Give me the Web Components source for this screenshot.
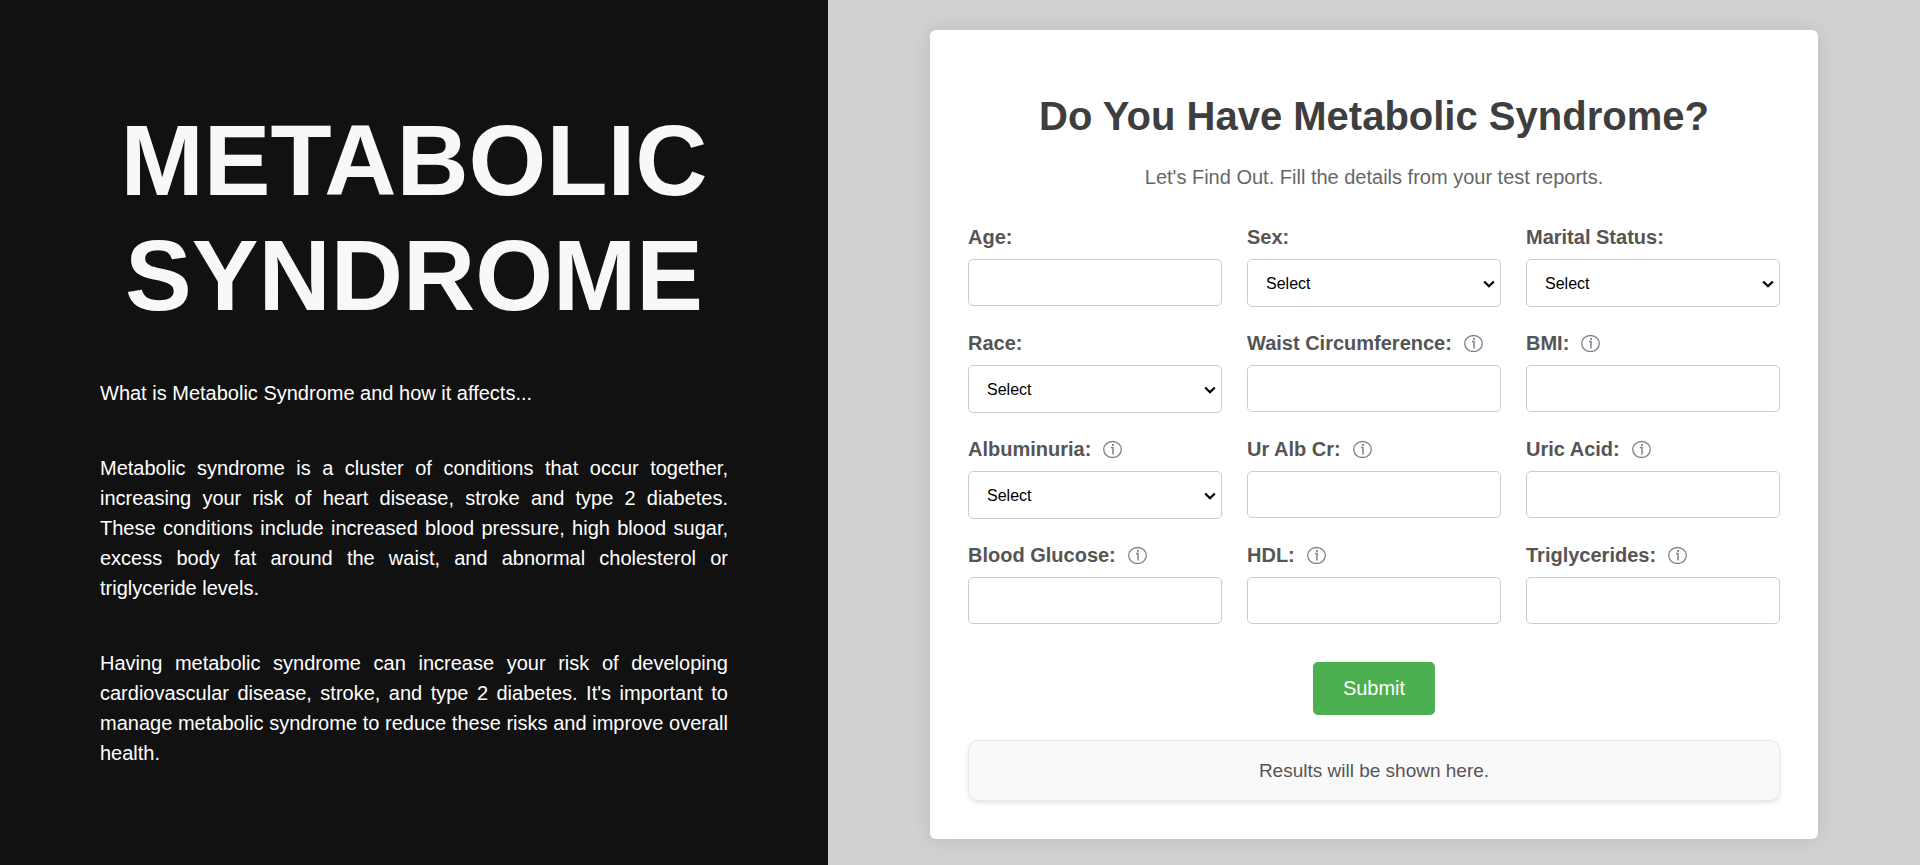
<!DOCTYPE html>
<html lang="en">
<head>
<meta charset="utf-8">
<title>Metabolic Syndrome</title>
<style>
  body { margin: 0; font-family: "Liberation Sans", Arial, sans-serif; background: #d2d1cf; }
</style>
</head>
<body>
<syndrome-page>
  <intro-panel slot="intro" heading="METABOLIC SYNDROME">
    <p>What is Metabolic Syndrome and how it affects...</p>
    <p>Metabolic syndrome is a cluster of conditions that occur together, increasing your risk of heart disease, stroke and type 2 diabetes. These conditions include increased blood pressure, high blood sugar, excess body fat around the waist, and abnormal cholesterol or triglyceride levels.</p>
    <p>Having metabolic syndrome can increase your risk of developing cardiovascular disease, stroke, and type 2 diabetes. It's important to manage metabolic syndrome to reduce these risks and improve overall health.</p>
  </intro-panel>
  <form-card>
    <span slot="title">Do You Have Metabolic Syndrome?</span>
    <span slot="subtitle">Let's Find Out. Fill the details from your test reports.</span>
    <form-field label="Age:"></form-field>
    <form-field label="Sex:" kind="select"></form-field>
    <form-field label="Marital Status:" kind="select"></form-field>
    <form-field label="Race:" kind="select"></form-field>
    <form-field label="Waist Circumference:" info></form-field>
    <form-field label="BMI:" info></form-field>
    <form-field label="Albuminuria:" kind="select" info></form-field>
    <form-field label="Ur Alb Cr:" info></form-field>
    <form-field label="Uric Acid:" info></form-field>
    <form-field label="Blood Glucose:" info></form-field>
    <form-field label="HDL:" info></form-field>
    <form-field label="Triglycerides:" info></form-field>
    <result-box slot="result">Results will be shown here.</result-box>
  </form-card>
</syndrome-page>

<script>
const define = (name, render) => customElements.define(name, class extends HTMLElement {
  connectedCallback() {
    if (!this.shadowRoot) this.attachShadow({ mode: "open" }).innerHTML = render(this);
  }
});

define("syndrome-page", () => `
  <style>
    :host { display: grid; grid-template-columns: minmax(0, 828fr) minmax(0, 1092fr); min-height: 100vh; }
    main { display: flex; flex-direction: column; align-items: center; padding: 30px 20px 26px; box-sizing: border-box; }
  </style>
  <slot name="intro"></slot>
  <main><slot></slot></main>`);

define("intro-panel", el => `
  <style>
    :host { display: block; background: #111; color: #fff; padding: 103px 100px 30px; box-sizing: border-box; }
    h1 { margin: 0 0 45px; font-size: 100px; line-height: 115px; color: #f8f8f8; text-align: center; }
    ::slotted(p) { margin: 0 0 45px; font-size: 20px; line-height: 30px; text-align: justify; }
    ::slotted(p:last-child) { margin-bottom: 0; }
  </style>
  <h1>${el.getAttribute("heading")}</h1>
  <slot></slot>`);

define("form-card", () => `
  <style>
    :host { display: block; width: 100%; max-width: 888px; padding: 61px 38px 38px; box-sizing: border-box;
            background: #fff; border-radius: 6px; box-shadow: 0 0 20px rgba(0, 0, 0, .1); text-align: center; }
    h2 { margin: 0 0 24px; font-size: 40px; line-height: 50px; color: #3e3e3e; }
    p { margin: 0 0 36px; font-size: 20px; line-height: 24px; color: #666; }
    .fields { display: grid; grid-template-columns: repeat(3, minmax(0, 1fr)); gap: 24px 25px; text-align: left; }
    button { display: block; margin: 37px auto 25px; padding: 15px 30px; border: 0; border-radius: 5px;
             background: #4caf50; color: #fff; font: 20px/23px "Liberation Sans", Arial, sans-serif; }
  </style>
  <h2><slot name="title"></slot></h2>
  <p><slot name="subtitle"></slot></p>
  <form onsubmit="return false">
    <div class="fields"><slot></slot></div>
    <button type="submit">Submit</button>
  </form>
  <slot name="result"></slot>`);

define("form-field", el => `
  <style>
    :host { display: block; }
    .head { display: flex; align-items: center; gap: 12px; height: 24px; margin-bottom: 10px; }
    label { font-size: 20px; line-height: 24px; font-weight: bold; color: #555; white-space: nowrap; }
    input, select { display: block; width: 100%; box-sizing: border-box; margin: 0; border: 1px solid #ccc; border-radius: 5px;
                    background-color: #fff; color: #000; font: 16px "Liberation Sans", Arial, sans-serif; }
    input { height: 47px; padding: 13px; margin-bottom: 1px; }
    select { height: 48px; padding: 13px 18px; appearance: none; }
    .pick { position: relative; }
    .pick svg { position: absolute; right: 6px; top: 20px; pointer-events: none; }
  </style>
  <div class="head">
    <label for="control">${el.getAttribute("label")}</label>
    ${el.hasAttribute("info") ? "<info-icon></info-icon>" : ""}
  </div>
  ${el.getAttribute("kind") === "select"
    ? `<div class="pick">
         <select id="control"><option>Select</option></select>
         <svg width="12" height="10" viewBox="0 0 12 10" fill="none" stroke="#000" stroke-width="2.300" aria-hidden="true"><path d="M1.200 2.500 6 7.200 10.800 2.500"/></svg>
       </div>`
    : '<input id="control" type="text">'}`);

define("info-icon", () => `
  <style>
    :host { display: block; width: 19px; height: 18px; color: #857d8c; }
    svg { display: block; }
  </style>
  <svg width="19" height="18" viewBox="0 0 19 18" fill="none" stroke="currentColor" role="img" aria-label="More information">
    <ellipse cx="9.5" cy="9.500" rx="8.800" ry="8" stroke-width="1.300"/>
    <path d="M8 7.500h2v7" stroke-width="1.500"/>
    <path d="M9 4h2v1.700h-2z" fill="currentColor" stroke="none"/>
  </svg>`);

define("result-box", () => `
  <style>
    :host { display: block; padding: 18px; border: 1px solid #e8e8e8; border-radius: 10px; background: #f9f9f9;
            box-shadow: 0 2px 5px rgba(0, 0, 0, .1); font-size: 19px; line-height: 23px; color: #555; }
  </style>
  <slot></slot>`);
</script>
</body>
</html>
